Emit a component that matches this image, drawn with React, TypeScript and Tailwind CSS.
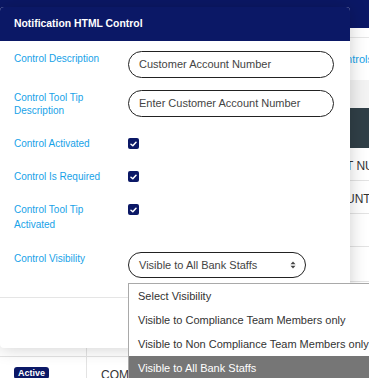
const NAVY = "bg-[#0b1866]";

type Row = { h: string; status: string; name: string; desc: string };

// rows above the last one sit behind the modal, only their right ends show
const ROWS: Row[] = [
  { h: "h-[33px]", status: "", name: "", desc: "ACCOUNT NUMBER" },
  { h: "h-[33px]", status: "", name: "", desc: "MIN AMOUNT" },
  { h: "h-[33px]", status: "", name: "", desc: "" },
  { h: "h-[35px]", status: "", name: "", desc: "" },
  { h: "h-[75px]", status: "", name: "", desc: "" },
  { h: "h-[33px]", status: "Active", name: "COMPLIANCE", desc: "" },
];

function BackgroundPage() {
  return (
    <div className="w-[600px]">
      <div className={`h-[28px] ${NAVY}`} />
      <div className="h-[10px] border-b border-[#e6e6e6]" />
      <div className="h-[42px] grid grid-cols-[332px_1fr] items-center text-[11px] text-[#17a2e8]">
        <span />
        <span>Controls</span>
      </div>
      <div className="h-[28px] bg-[#f3f3f3]" />
      <div className="h-[40px] bg-[#303f47]" />
      {ROWS.map((row, i) => (
        <div
          key={i}
          className={`grid grid-cols-[87px_193px_1fr] border-b border-[#e3e3e3] text-[12px] text-[#333] ${row.h}`}
        >
          <div className="border-r border-[#e3e3e3] px-[14px] pt-[10px]">
            {row.status && (
              <span className={`block w-fit ${NAVY} text-white text-[9px] font-bold leading-[12px] px-[4px] rounded-[3px]`}>
                {row.status}
              </span>
            )}
          </div>
          <div className="border-r border-[#e3e3e3] px-[14px] pt-[9px]">{row.name}</div>
          <div className="px-[14px] pt-[9px]">{row.desc}</div>
        </div>
      ))}
    </div>
  );
}

function Check() {
  return (
    <span className={`flex items-center justify-center w-[11px] h-[11px] rounded-[2px] ${NAVY}`}>
      <svg width="7" height="6" viewBox="0 0 7 6" fill="none">
        <path d="M1 3.2 2.8 4.8 6 1.2" stroke="white" strokeWidth="1.5" strokeLinecap="round" strokeLinejoin="round" />
      </svg>
    </span>
  );
}

function SortArrows() {
  return (
    <svg width="6" height="8" viewBox="0 0 6 8" fill="#444">
      <path d="M3 0.5 5.5 3.3H0.5Z" />
      <path d="M3 7.5 5.5 4.7H0.5Z" />
    </svg>
  );
}

function ControlModal() {
  const label = "w-[114px] shrink-0 text-[10px] text-[#17a2e8]";
  const field =
    "w-[206px] h-[27px] rounded-full border border-[#222] px-[10px] flex items-center text-[11px] text-[#444]";
  return (
    <div className="absolute left-0 top-[7px] w-[350px] h-[341px] bg-white rounded-[4px] shadow-[0_0_18px_rgba(0,0,0,0.2)] flex flex-col">
      <div className={`h-[34px] ${NAVY} rounded-t-[4px] flex items-center px-[14px] text-white font-bold text-[10.4px]`}>
        Notification HTML Control
      </div>
      <div className="h-[257px] border-b border-[#e5e5e5] px-[14px] pt-[10px] flex flex-col">
        <div className="flex items-start">
          <div className={`${label} leading-[13px] pt-[1px]`}>Control Description</div>
          <div className={field}>Customer Account Number</div>
        </div>
        <div className="flex items-start mt-[12px]">
          <div className={`${label} leading-[13px] pt-[1px] pr-[20px]`}>Control Tool Tip Description</div>
          <div className={field}>Enter Customer Account Number</div>
        </div>
        <div className="flex items-center h-[15px] mt-[19px]">
          <div className={`${label} leading-[15px]`}>Control Activated</div>
          <Check />
        </div>
        <div className="flex items-center h-[15px] mt-[18px]">
          <div className={`${label} leading-[15px]`}>Control Is Required</div>
          <Check />
        </div>
        <div className="flex items-start mt-[18px]">
          <div className={`${label} leading-[15px] pr-[20px]`}>Control Tool Tip Activated</div>
          <div className="pt-[2px]">
            <Check />
          </div>
        </div>
        <div className="flex items-start mt-[20px]">
          <div className={`${label} leading-[13px]`}>Control Visibility</div>
          <div className="w-[178px] h-[26px] rounded-full border border-[#222] pl-[10px] pr-[9px] flex items-center justify-between text-[11px] text-[#444]">
            <span>Visible to All Bank Staffs</span>
            <SortArrows />
          </div>
        </div>
      </div>
      <div className="flex-1" />
    </div>
  );
}

function VisibilityMenu() {
  const options = [
    "Select Visibility",
    "Visible to Compliance Team Members only",
    "Visible to Non Compliance Team Members only",
    "Visible to All Bank Staffs",
  ];
  return (
    <div className="absolute left-[128px] top-[283px] w-[260px] bg-white border border-[#a9a9a9]">
      {options.map((opt, i) => (
        <div
          key={opt}
          className={`h-[24px] px-[9px] flex items-center text-[11px] whitespace-nowrap ${
            i === options.length - 1 ? "bg-[#767676] text-white" : "text-[#333]"
          }`}
        >
          {opt}
        </div>
      ))}
    </div>
  );
}

export default function App() {
  return (
    <div className="relative w-[369px] h-[378px] overflow-hidden bg-white font-['Liberation_Sans',Arial,sans-serif]">
      <BackgroundPage />
      <ControlModal />
      <VisibilityMenu />
    </div>
  );
}
